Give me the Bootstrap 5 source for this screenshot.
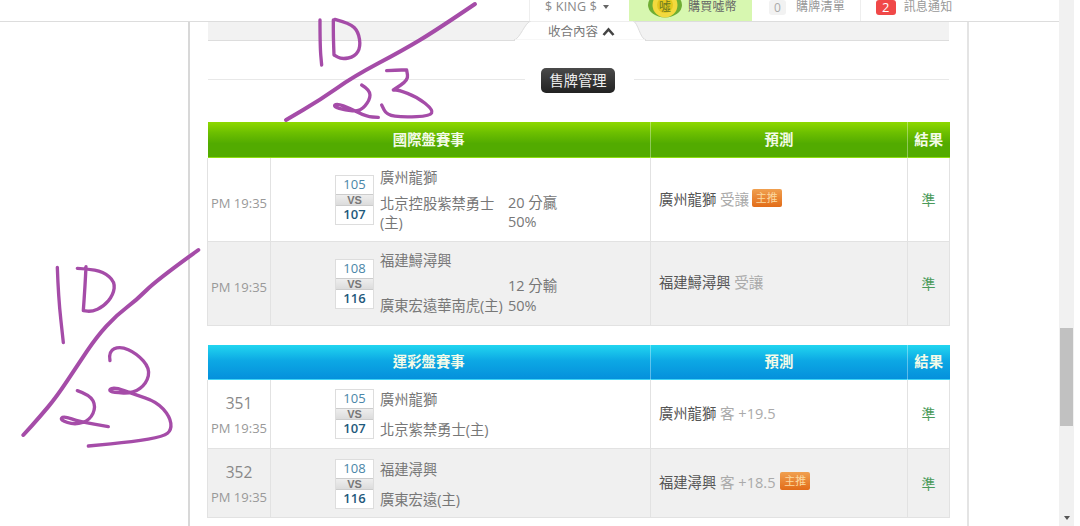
<!DOCTYPE html>
<html lang="zh-Hant">
<head>
<meta charset="utf-8">
<title>售牌管理</title>
<link href="https://cdn.jsdelivr.net/npm/bootstrap@5.3.0/dist/css/bootstrap.min.css" rel="stylesheet">
<style>
html,body{height:526px;overflow:hidden;background:#fff;}
body{font-family:"Open Sans","Noto Sans CJK TC",sans-serif;font-size:14px;color:#666;}
.shell{width:1080px;height:526px;position:relative;overflow:hidden;}
.pagearea{width:1059px;height:526px;}
.scrolltrack{width:15px;height:526px;background:#f1f1f1;}
.scrollthumb{height:98px;margin:328px 1px 0;background:#c1c1c1;}
.scrollarrow{margin:90px auto 0;width:0;height:0;border-left:3px solid transparent;border-right:3px solid transparent;border-top:4px solid #555;}
.rightgap{width:6px;}
.topstrip{height:22px;border-bottom:1px solid #ddd;background:#fff;padding-left:529px;overflow:hidden;font-size:12px;line-height:14px;color:#999;}
.topcell{height:21px;white-space:nowrap;letter-spacing:.2px;}
.cellking{width:100px;border-left:1px solid #eee;padding-left:15px;font-size:12.5px;color:#888;}
.cellking i{display:inline-block;width:0;height:0;border-left:3.5px solid transparent;border-right:3.5px solid transparent;border-top:4px solid #666;margin-left:3px;vertical-align:2px;}
.cellbuy{width:123px;background:#d7f7b0;color:#666;padding-left:19px;gap:5px;}
.cellcart{width:108px;padding-left:17px;gap:10px;}
.cellmsg{width:110px;border-left:1px solid #eee;padding-left:15px;gap:8px;}
.coin{width:35px;height:26px;margin-top:-8px;flex:none;}
.pillzero{background:#f2f2f2;color:#aaa;border-radius:3px;padding:0 5px;height:15px;line-height:15px;}
.pillred{background:#f04848;color:#fff;border-radius:3px;padding:0 6px;height:15px;line-height:15px;font-size:13px;}
.mainframe{width:781px;margin-left:188px;height:504px;border-left:2px solid #d8d8d8;border-right:2px solid #e4e4e4;padding:0 18px;}
.foldbar{height:19px;background:#f2f2f2;border-bottom:1px solid #ddd;position:relative;}
.foldtab{position:absolute;left:306px;top:-1px;width:132px;height:20px;}
.foldlabel{position:absolute;left:340px;top:0;line-height:19px;font-size:12.5px;color:#777;white-space:nowrap;}
.foldchev{width:13px;height:9px;margin-left:1px;vertical-align:0;}
.titlewrap{height:81px;padding-top:27px;align-items:flex-start;}
.titleline{height:1px;background:#e8e8e8;margin-top:11px;}
.titleleft{width:317px;flex:none;}
.titleright{flex:1 1 auto;}
.titlepill{background:linear-gradient(#4a4a4a,#222);color:#eee;border-radius:5px;width:74px;height:25px;line-height:25px;text-align:center;font-size:14.3px;margin:0 19px 0 16px;flex:none;}
.gametable{width:742px;table-layout:fixed;margin:0 0 19px -1px;border-collapse:collapse;}
.gametable>thead{vertical-align:middle;}
.gametable>thead>tr>th{color:#f4fbe8;font-weight:700;text-align:center;vertical-align:middle;font-size:14.4px;padding:0;border:0;border-right:1px solid rgba(255,255,255,.35);background:transparent;box-shadow:none;}
.gametable>thead>tr>th:last-child{border-right:0;}
.gametable>thead.headgreen{background:linear-gradient(#8ed800 0,#6cbf00 30%,#52ab00 60%,#52ab00 calc(100% - 1px),#8ede10 calc(100% - 1px));}
.gametable>thead.headgreen>tr{height:36px;}
.gametable>thead.headblue{background:linear-gradient(#22d6f0 0,#0ca8e4 45%,#0590dc calc(100% - 1px),#3fd4f5 calc(100% - 1px));}
.gametable>thead.headblue>tr{height:35px;}
.gametable>tbody>tr>td{padding:0;border:1px solid #e2e2e2;border-top:0;vertical-align:middle;color:#666;background:transparent;box-shadow:none;}
.gametable>tbody>tr.rowwhite{background:#fff;}
.gametable>tbody>tr.rowgrey{background:#f0f0f0;}
.rowtall{height:83.5px;}
.rowshort{height:69px;}
.gametable>tbody>tr>td.timecell{text-align:center;font-size:13px;color:#999;line-height:25px;}
.gametable>tbody>tr.rowshort>td.timecell{padding-top:4px;}
.gametable>tbody>tr.rowtall>td.timecell{padding-top:8px;}
.timecell .num{font-size:15.5px;display:block;color:#888;}
.matchwrap{padding-left:64px;}
.scorebox{width:39px;flex:none;border:1px solid #ddd;background:#fff;text-align:center;line-height:17px;margin-top:1px;}
.scoretop{color:#4a86a8;font-size:13px;height:18px;}
.scorebot{color:#1f5a7c;font-size:13px;font-weight:600;height:18px;}
.scorevs{height:12px;line-height:10px;background:linear-gradient(#eee,#dcdcdc);color:#777;font-size:11px;font-weight:700;font-family:"Liberation Sans",sans-serif;border-top:1px solid #ccc;border-bottom:1px solid #ccc;}
.teamcol{width:124px;margin-left:6px;flex:none;line-height:19px;font-size:14.3px;color:#777;}
.teamfirst{margin-bottom:7px;}
.teamcol.pad3{height:64px;display:flex;flex-direction:column;justify-content:space-between;}
.teamcol.pad2{height:56px;margin-top:3px;display:flex;flex-direction:column;justify-content:space-between;line-height:26px;}
.pctcol{margin-left:4px;line-height:19.5px;font-size:14.5px;color:#777;padding-top:25px;white-space:nowrap;}
.gametable>tbody>tr>td.predcell{padding-left:8px;font-size:14.3px;color:#555;white-space:nowrap;}
.predsoft{color:#aaa;font-size:14.6px;}
.tagmain{display:inline-block;background:linear-gradient(#f0a050,#e26c18);color:#fbd9a0;font-size:11px;line-height:17px;height:18px;border-radius:2px;width:30px;text-align:center;vertical-align:3px;margin-left:-1px;}
.tagnudge{margin-left:1px;}
.gametable>tbody>tr>td.rescell{text-align:center;color:#4a9a5a;font-size:14px;}
.inkoverlay{position:absolute;left:0;top:0;width:1080px;height:526px;pointer-events:none;}
.inkoverlay path{fill:none;stroke:#a54ca8;stroke-linecap:round;stroke-linejoin:round;}
</style>
</head>
<body>
<div class="shell d-flex">
  <div class="pagearea">
    <div class="topstrip d-flex">
      <div class="topcell cellking">$ KING $ <i></i></div>
      <div class="topcell cellbuy d-flex">
        <svg class="coin" viewBox="0 0 35 26"><ellipse cx="17" cy="13" rx="17" ry="12.5" fill="#6fae34"/><ellipse cx="17" cy="13" rx="12.5" ry="12.5" fill="#f3d93e"/><circle cx="17" cy="13" r="8" fill="#e4c81e"/><text x="17" y="19" text-anchor="middle" font-size="12" fill="#6a7a20">噓</text></svg>
        <span>購買噓幣</span>
      </div>
      <div class="topcell cellcart d-flex"><span class="pillzero">0</span><span>購牌清單</span></div>
      <div class="topcell cellmsg d-flex"><span class="pillred">2</span><span>訊息通知</span></div>
    </div>
    <div class="mainframe">
      <div class="foldbar">
        <svg class="foldtab" viewBox="0 0 132 20"><path d="M0 19 C6 18 11 1 17 0 L119 0 C124 1 126 18 132 19 Z" fill="#fff" stroke="#ddd"/><rect x="1" y="18.5" width="130" height="2" fill="#fff"/></svg>
        <span class="foldlabel">收合內容 <svg class="foldchev" viewBox="0 0 13 9"><path d="M1.5 8 L6.5 2.5 L11.5 8" fill="none" stroke="#444" stroke-width="2.6"/></svg></span>
      </div>
      <div class="titlewrap d-flex">
        <div class="titleline titleleft"></div>
        <div class="titlepill">售牌管理</div>
        <div class="titleline titleright"></div>
      </div>
      <table class="table gametable">
        <colgroup><col style="width:63px"><col style="width:380px"><col style="width:257px"><col style="width:42px"></colgroup>
        <thead class="headgreen"><tr><th colspan="2">國際盤賽事</th><th>預測</th><th>結果</th></tr></thead>
        <tbody>
          <tr class="rowwhite rowtall">
            <td class="timecell">PM 19:35</td>
            <td><div class="matchwrap d-flex align-items-center">
              <div class="scorebox"><div class="scoretop">105</div><div class="scorevs">VS</div><div class="scorebot">107</div></div>
              <div class="teamcol"><div class="teamfirst">廣州龍獅</div><div>北京控股紫禁勇士(主)</div></div>
              <div class="pctcol">20 分贏<br>50%</div>
            </div></td>
            <td class="predcell">廣州龍獅 <span class="predsoft">受讓</span> <span class="tagmain">主推</span></td>
            <td class="rescell">準</td>
          </tr>
          <tr class="rowgrey rowtall">
            <td class="timecell">PM 19:35</td>
            <td><div class="matchwrap d-flex align-items-center">
              <div class="scorebox"><div class="scoretop">108</div><div class="scorevs">VS</div><div class="scorebot">116</div></div>
              <div class="teamcol pad3"><div>福建鱘潯興</div><div class="text-nowrap">廣東宏遠華南虎(主)</div></div>
              <div class="pctcol">12 分輸<br>50%</div>
            </div></td>
            <td class="predcell">福建鱘潯興 <span class="predsoft">受讓</span></td>
            <td class="rescell">準</td>
          </tr>
        </tbody>
      </table>
      <table class="table gametable">
        <colgroup><col style="width:63px"><col style="width:380px"><col style="width:257px"><col style="width:42px"></colgroup>
        <thead class="headblue"><tr><th colspan="2">運彩盤賽事</th><th>預測</th><th>結果</th></tr></thead>
        <tbody>
          <tr class="rowwhite rowshort">
            <td class="timecell"><span class="num">351</span>PM 19:35</td>
            <td><div class="matchwrap d-flex align-items-center">
              <div class="scorebox"><div class="scoretop">105</div><div class="scorevs">VS</div><div class="scorebot">107</div></div>
              <div class="teamcol pad2"><div>廣州龍獅</div><div>北京紫禁勇士(主)</div></div>
            </div></td>
            <td class="predcell">廣州龍獅 <span class="predsoft">客 +19.5</span></td>
            <td class="rescell">準</td>
          </tr>
          <tr class="rowgrey rowshort">
            <td class="timecell"><span class="num">352</span>PM 19:35</td>
            <td><div class="matchwrap d-flex align-items-center">
              <div class="scorebox"><div class="scoretop">108</div><div class="scorevs">VS</div><div class="scorebot">116</div></div>
              <div class="teamcol pad2"><div>福建潯興</div><div>廣東宏遠(主)</div></div>
            </div></td>
            <td class="predcell">福建潯興 <span class="predsoft">客 +18.5</span> <span class="tagmain tagnudge">主推</span></td>
            <td class="rescell">準</td>
          </tr>
        </tbody>
      </table>
    </div>
  </div>
  <div class="scrolltrack"><div class="scrollthumb"></div><div class="scrollarrow"></div></div>
  <div class="rightgap"></div>
  <svg class="inkoverlay" viewBox="0 0 1080 526">
    <g transform="translate(0,240) scale(.3333)">
      <path stroke-width="12" data-pts="595,30 470,120 410,180 350,225 290,290 230,380 170,470 120,530 70,585"/>
      <path stroke-width="10" data-pts="172,82 175,170 190,308"/>
      <path stroke-width="10" data-pts="232,85 258,86 310,95 345,125 340,165 310,200 275,215 250,212 250,212 250,212 255,140 258,80"/>
      <path stroke-width="10" data-pts="232,452 270,465 288,500 270,540 225,555 180,540 190,528 240,545 325,560"/>
      <path stroke-width="10" data-pts="330,362 325,335 360,318 410,340 450,385 440,430 400,460 340,458 325,450 345,442 400,462 470,485 510,530 515,570 490,590 400,605 265,618"/>
    </g>
    <g transform="translate(270,0) scale(.3333)">
      <path stroke-width="12" data-pts="615,12 500,90 400,150 250,230 150,300 48,360"/>
      <path stroke-width="10" data-pts="150,60 150,140 155,195"/>
      <path stroke-width="10" data-pts="195,58 240,70 265,95 272,140 255,170 215,178 192,165 192,165 192,165 190,110 190,60"/>
      <path stroke-width="10" data-pts="275,255 300,270 300,300 270,335 225,330 190,320 200,310 240,325 290,350 325,352"/>
      <path stroke-width="10" data-pts="350,212 380,210 410,210 410,210 415,240 370,270 370,270 385,270 440,290 490,330 480,348 400,352 350,345 335,315"/>
    </g>
  </svg>
</div>
<script src="https://cdn.jsdelivr.net/npm/bootstrap@5.3.0/dist/js/bootstrap.bundle.min.js"></script>
<script>
document.querySelectorAll('.inkoverlay path').forEach(function(p){
  var pts=p.getAttribute('data-pts').split(' ').map(function(s){return s.split(',').map(Number);});
  var d='M'+pts[0];
  for(var i=1;i<pts.length-1;i++){
    var mx=(pts[i][0]+pts[i+1][0])/2,my=(pts[i][1]+pts[i+1][1])/2;
    d+=' Q'+pts[i]+' '+mx+','+my;
  }
  d+=' L'+pts[pts.length-1];
  p.setAttribute('d',d);
});
</script>
</body>
</html>
